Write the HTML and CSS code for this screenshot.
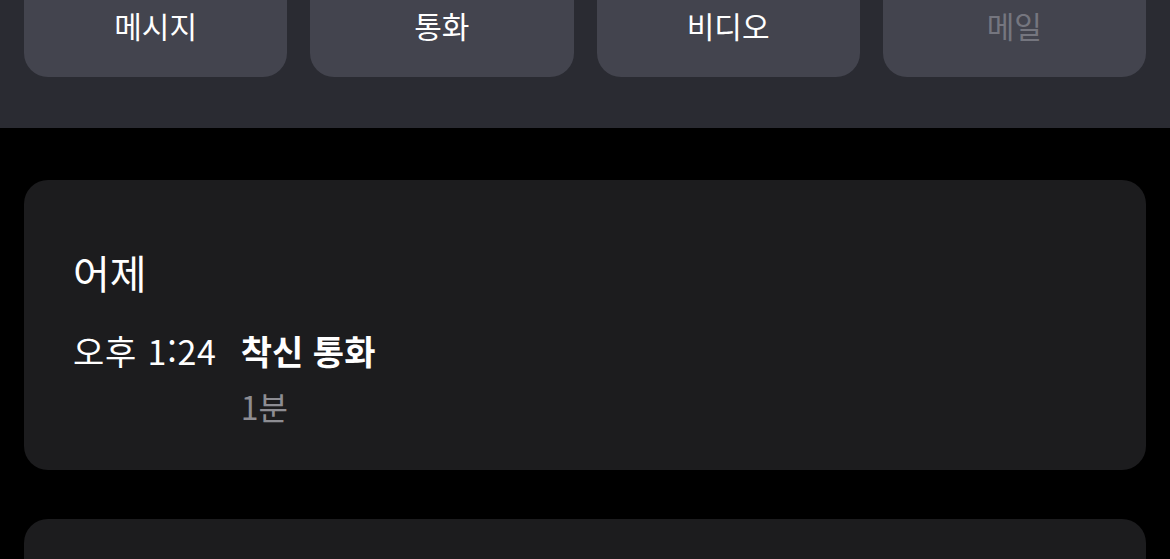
FILE: index.html
```html
<!DOCTYPE html>
<html lang="ko">
<head>
  <meta charset="utf-8">
  <title>연락처</title>
  <link rel="stylesheet" href="styles.css">
</head>
<body>
  <div class="header">
    <div class="actions">
      <button class="action">메시지</button>
      <button class="action">통화</button>
      <button class="action">비디오</button>
      <button class="action disabled">메일</button>
    </div>
  </div>

  <div class="content">
    <div class="card">
      <h2 class="day">어제</h2>
      <div class="call-row">
        <span class="call-time">오후 1:24</span>
        <div class="call-info">
          <span class="call-type">착신 통화</span>
          <span class="call-length">1분</span>
        </div>
      </div>
    </div>

    <div class="card"></div>
  </div>
</body>
</html>
```

FILE: styles.css
```css
body {
  background-color: black;
  margin: 0;
  padding: 0;
  font-family: "Noto Sans CJK KR", "Noto Sans", sans-serif;
  color: white;
}

.header {
  background-color: #2a2b32;
  height: 128px;
  padding: 0 24px;
  box-sizing: border-box;
}

.actions {
  display: flex;
  gap: 23px;
}

.action {
  flex: 1;
  height: 77px;
  padding: 0 0 28px 0;
  border: none;
  border-radius: 0 0 24px 24px;
  background-color: #43444e;
  color: white;
  font-family: inherit;
  font-size: 30px;
  line-height: 40px;
}

.action.disabled {
  color: #75767f;
}

.content {
  display: flex;
  flex-direction: column;
  gap: 49px;
  padding: 52px 24px 0 24px;
}

.card {
  background-color: #1c1c1e;
  border-radius: 24px;
  padding: 68px 49px 44px 49px;
}

.day {
  margin: 0;
  font-size: 40px;
  font-weight: normal;
  line-height: 48px;
}

.call-row {
  display: flex;
  gap: 24px;
  margin-top: 33px;
}

.call-time {
  font-size: 34px;
  line-height: 44px;
  letter-spacing: 0.8px;
}

.call-info {
  display: flex;
  flex-direction: column;
  gap: 13px;
}

.call-type {
  font-size: 34px;
  line-height: 44px;
  font-weight: bold;
}

.call-length {
  font-size: 32px;
  line-height: 40px;
  color: #8d8d93;
}
```
